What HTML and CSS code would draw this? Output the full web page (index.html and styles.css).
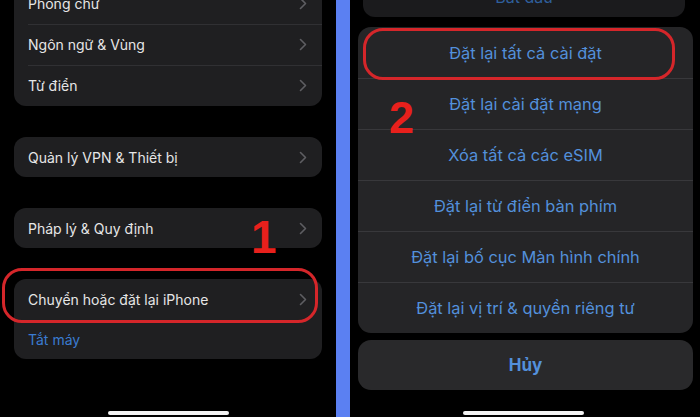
FILE: index.html
```html
<!DOCTYPE html>
<html lang="vi">
<head>
<meta charset="utf-8">
<link rel="stylesheet" href="styles.css">
</head>
<body>
<div class="screen">
  <section class="left">
    <div class="group first">
      <div class="row"><span>Phông chữ</span><svg class="chev" viewBox="0 0 8 13"><path d="M1.5 1.5 L6.5 6.5 L1.5 11.5"/></svg></div>
      <div class="row sep"><span>Ngôn ngữ &amp; Vùng</span><svg class="chev" viewBox="0 0 8 13"><path d="M1.5 1.5 L6.5 6.5 L1.5 11.5"/></svg></div>
      <div class="row sep"><span>Từ điển</span><svg class="chev" viewBox="0 0 8 13"><path d="M1.5 1.5 L6.5 6.5 L1.5 11.5"/></svg></div>
    </div>
    <div class="group">
      <div class="row"><span>Quản lý VPN &amp; Thiết bị</span><svg class="chev" viewBox="0 0 8 13"><path d="M1.5 1.5 L6.5 6.5 L1.5 11.5"/></svg></div>
    </div>
    <div class="group">
      <div class="row"><span>Pháp lý &amp; Quy định</span><svg class="chev" viewBox="0 0 8 13"><path d="M1.5 1.5 L6.5 6.5 L1.5 11.5"/></svg></div>
    </div>
    <div class="group reset">
      <div class="row"><span>Chuyển hoặc đặt lại iPhone</span><svg class="chev" viewBox="0 0 8 13"><path d="M1.5 1.5 L6.5 6.5 L1.5 11.5"/></svg></div>
      <div class="row link"><span>Tắt máy</span></div>
      <div class="ring ring-left"></div>
      <div class="step step-one">1</div>
    </div>
    <div class="home"></div>
  </section>
  <div class="divider"></div>
  <section class="right">
    <div class="sheet-top"><span>Bắt đầu</span></div>
    <div class="sheet">
      <div class="action">Đặt lại tất cả cài đặt</div>
      <div class="action sep">Đặt lại cài đặt mạng</div>
      <div class="action sep">Xóa tất cả các eSIM</div>
      <div class="action sep">Đặt lại từ điển bàn phím</div>
      <div class="action sep">Đặt lại bố cục Màn hình chính</div>
      <div class="action sep">Đặt lại vị trí &amp; quyền riêng tư</div>
      <div class="ring ring-right"></div>
      <div class="step step-two">2</div>
    </div>
    <div class="cancel">Hủy</div>
    <div class="home"></div>
  </section>
</div>
</body>
</html>
```

FILE: styles.css
```css
* { box-sizing: border-box; }
html, body {
  margin: 0;
  padding: 0;
  background: #000;
}
body {
  width: 700px;
  height: 417px;
  overflow: hidden;
  font-family: Inter, Roboto, "Liberation Sans", sans-serif;
  -webkit-font-smoothing: antialiased;
}
.screen {
  display: flex;
  width: 700px;
  height: 417px;
  overflow: hidden;
}
.left {
  width: 336px;
  padding: 0 14px;
  display: flex;
  flex-direction: column;
  gap: 31px;
  position: relative;
}
.group {
  background: #1f1f21;
  border-radius: 12px;
  position: relative;
}
.group.first { margin-top: -17px; }
.row {
  height: 40px;
  display: flex;
  align-items: center;
  justify-content: space-between;
  padding: 0 14px 0 14px;
  color: #e6e6e6;
  font-size: 14px;
  position: relative;
}
.group.first .row { height: 41px; }
.row.sep::before {
  content: "";
  position: absolute;
  left: 14px;
  right: 0;
  top: 0;
  height: 1px;
  background: #303033;
}
.row.link { color: #3a7bd0; }
.chev {
  width: 8px;
  height: 13px;
  margin-right: 1px;
}
.chev path {
  fill: none;
  stroke: #5e5e62;
  stroke-width: 1.6;
  stroke-linecap: round;
  stroke-linejoin: round;
}
.ring {
  position: absolute;
  border: 3px solid #d5262a;
  border-radius: 20px;
  pointer-events: none;
}
.ring-left {
  left: -12px;
  top: -11px;
  width: 316px;
  height: 55px;
}
.step {
  position: absolute;
  color: #e8201c;
  font-family: "Liberation Sans", Arial, sans-serif;
  font-weight: 700;
  line-height: 1;
}
.step-one {
  font-size: 46px;
  left: 237px;
  top: -65px;
}
.home {
  position: absolute;
  bottom: 2px;
  width: 121px;
  height: 4px;
  border-radius: 2px;
  background: #f2f2f2;
}
.left .home { left: 108px; }
.divider {
  width: 14px;
  background: #5b80f2;
  flex: none;
}
.right {
  flex: 1;
  padding: 0 7px 0 8px;
  display: flex;
  flex-direction: column;
  position: relative;
}
.sheet-top {
  margin: -30px 8px 0 5px;
  height: 47px;
  background: #1b1b1d;
  border-radius: 12px;
  display: flex;
  align-items: center;
  justify-content: center;
  color: #2f5f9c;
  font-size: 16px;
  padding-top: 6px;
}
.sheet {
  margin-top: 10px;
  background: #252527;
  border-radius: 13px;
  position: relative;
}
.action {
  height: 51px;
  display: flex;
  align-items: center;
  justify-content: center;
  color: #5390db;
  font-size: 16.4px;
  position: relative;
}
.action.sep::before {
  content: "";
  position: absolute;
  left: 0;
  right: 0;
  top: 0;
  height: 1px;
  background: #38383b;
}
.ring-right {
  left: 5px;
  top: 1px;
  width: 312px;
  height: 52px;
}
.step-two {
  font-size: 45px;
  left: 31px;
  top: 68px;
}
.cancel {
  margin-top: 7px;
  height: 50px;
  background: #29292b;
  border-radius: 13px;
  display: flex;
  align-items: center;
  justify-content: center;
  color: #5390db;
  font-size: 17px;
  font-weight: 700;
}
.right .home { left: 113px; }
```
